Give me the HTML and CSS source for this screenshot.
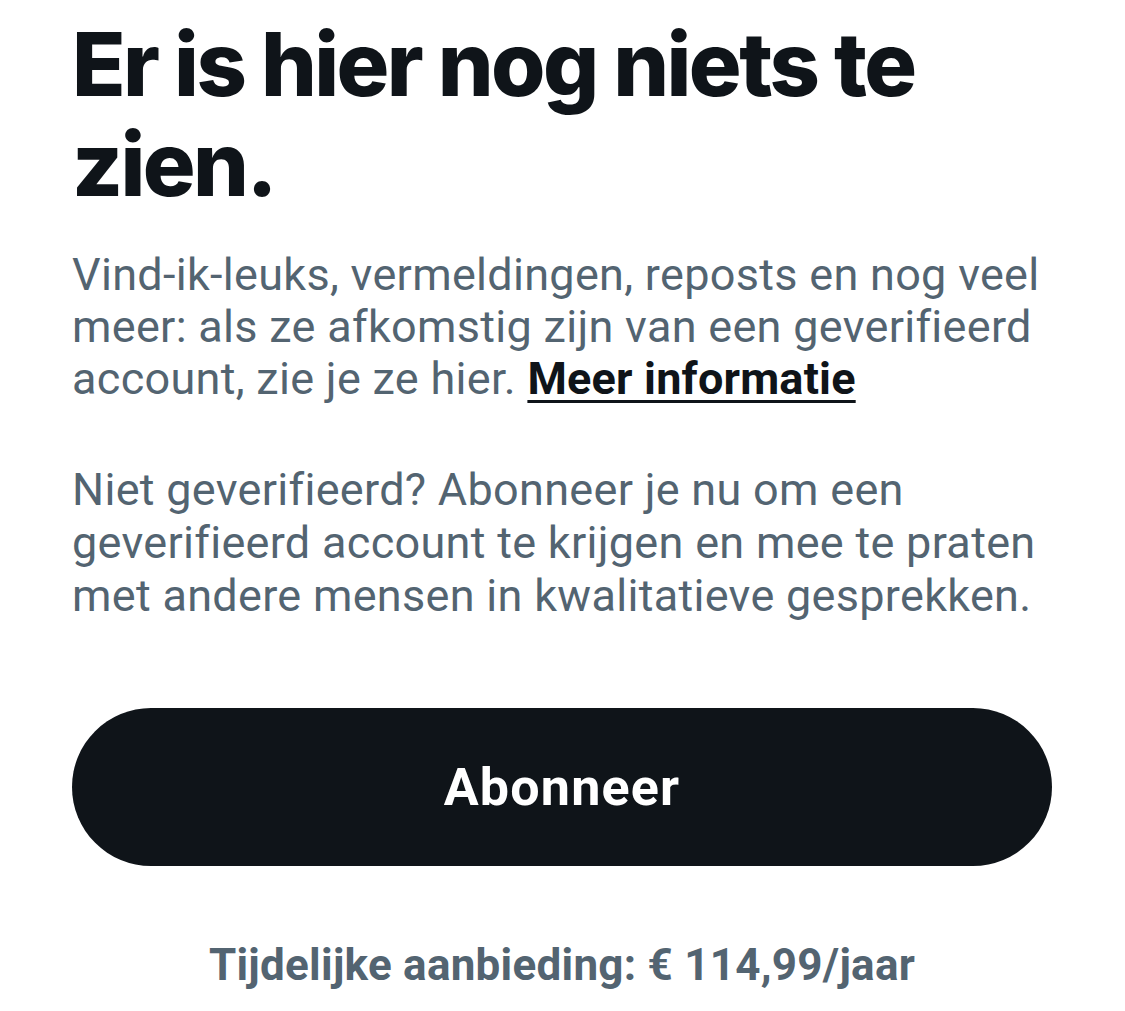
FILE: index.html
```html
<!DOCTYPE html>
<html lang="nl">
<head>
    <meta charset="UTF-8">
    <meta name="viewport" content="width=device-width, initial-scale=1.0">
    <title>Geverifieerd</title>
    <link rel="stylesheet" href="styles.css">
</head>
<body>
    <main class="empty-state">
        <h1>Er is hier nog niets te zien.</h1>
        <p>Vind-ik-leuks, vermeldingen, reposts en nog veel meer: als ze afkomstig zijn van een geverifieerd account, zie je ze hier. <a href="#">Meer informatie</a></p>
        <p>Niet geverifieerd? Abonneer je nu om een geverifieerd account te krijgen en mee te praten met andere mensen in kwalitatieve gesprekken.</p>
        <button class="subscribe">Abonneer</button>
        <div class="offer">Tijdelijke aanbieding: € 114,99/jaar</div>
    </main>
</body>
</html>
```

FILE: styles.css
```css
body {
    margin: 0;
    background: #fff;
    font-family: 'Roboto', 'Inter', sans-serif;
    color: #0f1419;
}
.empty-state {
    padding: 14px 60px 0 72px;
}
.empty-state h1 {
    margin: 0;
    font-family: 'Inter', sans-serif;
    font-size: 88px;
    line-height: 100px;
    font-weight: 800;
    letter-spacing: -2.6px;
}
.empty-state p {
    margin: 35px 0 0;
    font-size: 45px;
    line-height: 52px;
    letter-spacing: 0.3px;
    color: #536471;
}
.empty-state p + p {
    margin-top: 58px;
    line-height: 53px;
}
.empty-state a {
    color: #0f1419;
    font-weight: 700;
    letter-spacing: 0.2px;
    text-decoration: underline;
    text-decoration-thickness: 3px;
    text-underline-offset: 6px;
}
/* Pill button, full content width */
.subscribe {
    display: block;
    width: 980px;
    height: 158px;
    margin-top: 86px;
    border: none;
    border-radius: 79px;
    background: #0f1419;
    color: #fff;
    font-family: inherit;
    font-size: 52px;
    font-weight: 700;
    letter-spacing: 1.2px;
    cursor: pointer;
}
.offer {
    margin-top: 73px;
    width: 980px;
    text-align: center;
    font-size: 44px;
    font-weight: 700;
    letter-spacing: 0.25px;
    color: #536471;
}
```
